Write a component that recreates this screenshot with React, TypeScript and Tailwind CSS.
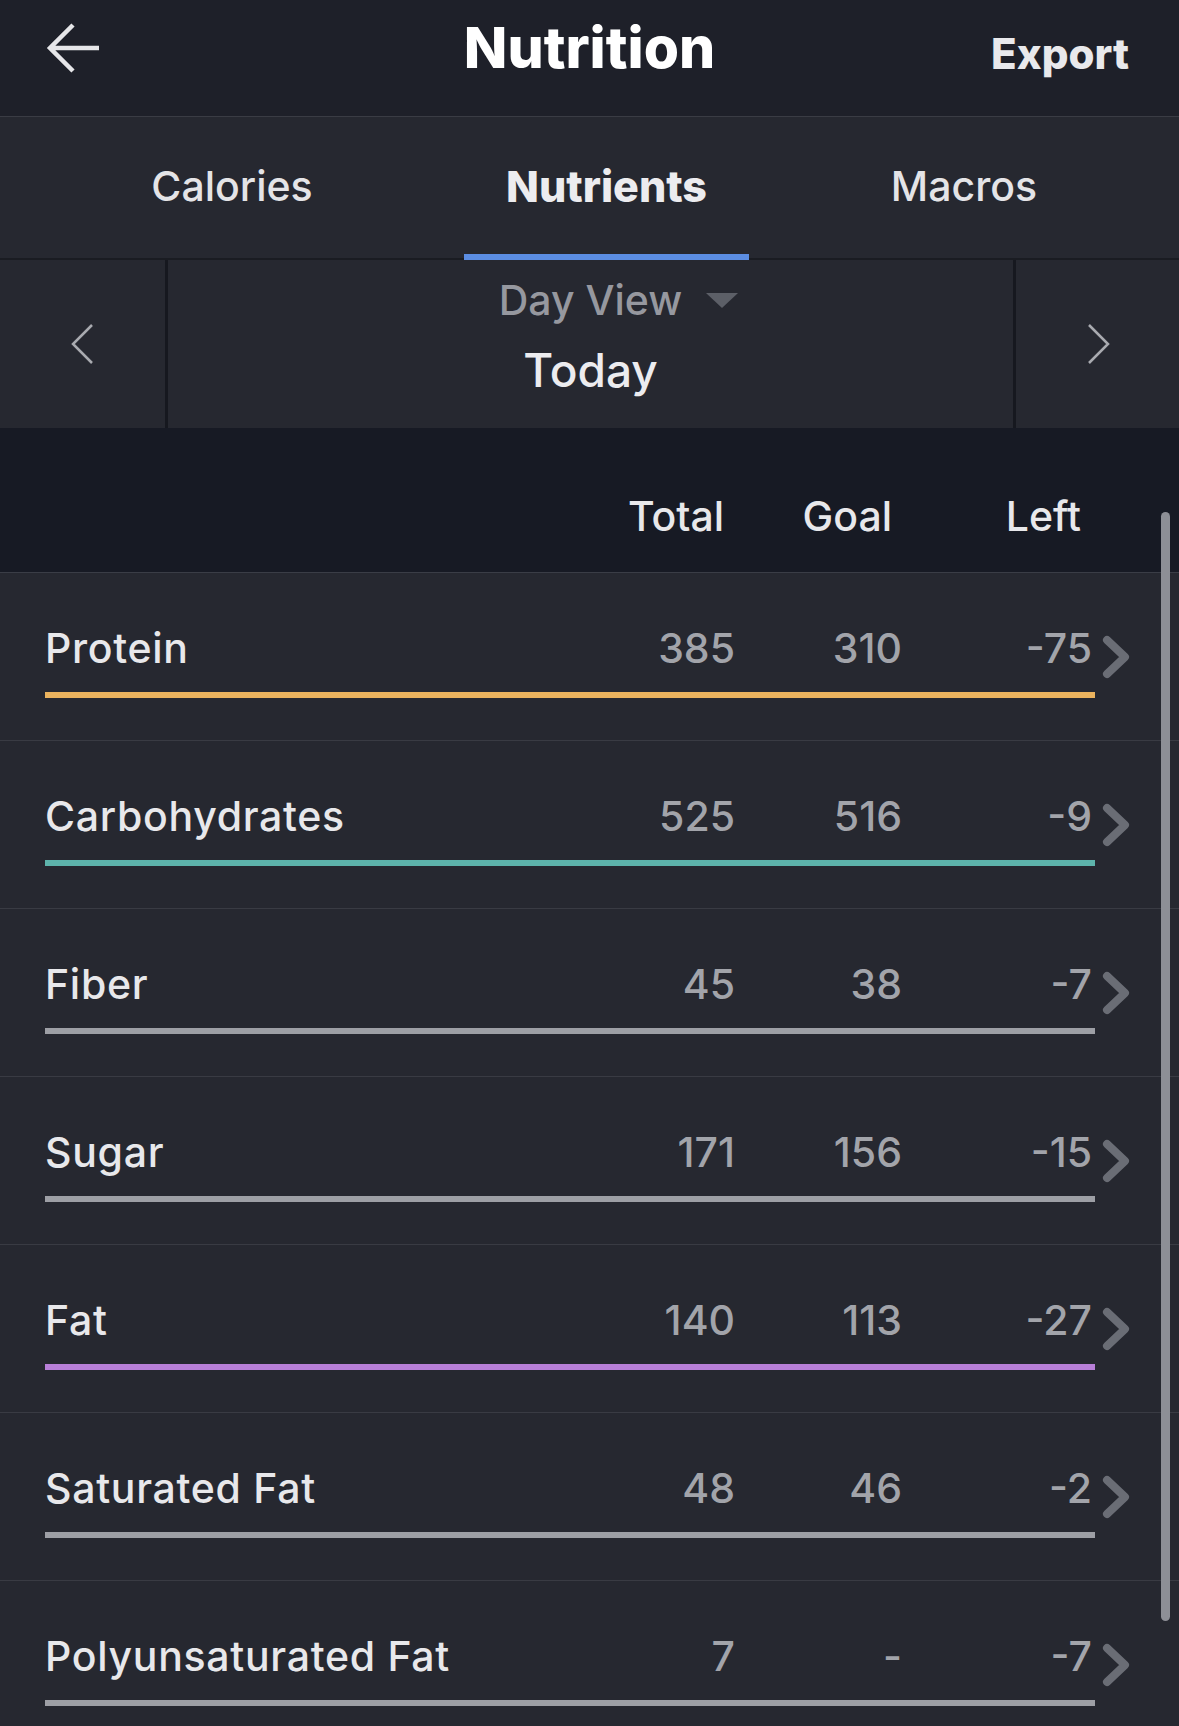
import { useState } from "react";

// linhas da tabela de nutrientes
const nutrients = [
  { name: "Protein", total: "385", goal: "310", left: "-75", bar: "bg-[#ebb35e]" },
  { name: "Carbohydrates", total: "525", goal: "516", left: "-9", bar: "bg-[#5db3ab]" },
  { name: "Fiber", total: "45", goal: "38", left: "-7", bar: "bg-[#9d9fa5]" },
  { name: "Sugar", total: "171", goal: "156", left: "-15", bar: "bg-[#9d9fa5]" },
  { name: "Fat", total: "140", goal: "113", left: "-27", bar: "bg-[#b87fd8]" },
  { name: "Saturated Fat", total: "48", goal: "46", left: "-2", bar: "bg-[#9d9fa5]" },
  { name: "Polyunsaturated Fat", total: "7", goal: "-", left: "-7", bar: "bg-[#9d9fa5]" },
];

const tabs = [
  { label: "Calories", width: "w-[464px]" },
  { label: "Nutrients", width: "w-[285px]" },
  { label: "Macros", width: "flex-1" },
];

function BackArrow() {
  return (
    <svg width="56" height="56" viewBox="0 0 56 56" fill="none">
      <path d="M4 27 H53 M27 4 L4 27 L27 50" stroke="#e6e6e9" strokeWidth="4.5" />
    </svg>
  );
}

function NavChevron({ dir }: { dir: "left" | "right" }) {
  return (
    <svg width="26" height="42" viewBox="0 0 26 42" fill="none">
      <path
        d={dir === "left" ? "M22 2 L3 21 L22 40" : "M4 2 L23 21 L4 40"}
        stroke="#a9abb0"
        strokeWidth="2.5"
      />
    </svg>
  );
}

function RowChevron() {
  return (
    <svg width="30" height="46" viewBox="0 0 30 46" fill="none">
      <path
        d="M6 6 L24 23 L6 40"
        stroke="#6a6d75"
        strokeWidth="8"
        strokeLinecap="round"
        strokeLinejoin="round"
      />
    </svg>
  );
}

export default function App() {
  const [active, setActive] = useState("Nutrients");

  return (
    <div className="relative w-full h-[1726px] overflow-hidden bg-[#262830] font-['Inter','Noto_Sans',sans-serif] text-[#e8e8eb]">
      {/* Cabeçalho */}
      <header className="h-[117px] bg-[#1e2029] border-b border-[#3a3c44] grid grid-cols-[1fr_auto_1fr] items-start">
        <div className="pl-[46px] pt-[21px]">
          <BackArrow />
        </div>
        <h1 className="mt-[16px] text-[57px] leading-[64px] font-extrabold text-white">
          Nutrition
        </h1>
        <div className="flex justify-end pr-[50px] pt-[29px]">
          <span className="text-[42px] leading-[50px] font-extrabold text-[#e9e9ec]">Export</span>
        </div>
      </header>

      {/* Abas */}
      <nav className="flex h-[143px]">
        {tabs.map((t) => {
          const isActive = t.label === active;
          return (
            <button
              key={t.label}
              onClick={() => setActive(t.label)}
              className={`${t.width} flex flex-col`}
            >
              <span
                className={`flex-1 flex items-center justify-center leading-[50px] ${
                  isActive ? "text-[43px] font-extrabold text-[#ececef]" : "text-[41px] font-medium text-[#e4e4e7]"
                }`}
              >
                {t.label}
              </span>
              <span className={`h-[6px] flex flex-col justify-end ${isActive ? "bg-[#5b8de2]" : ""}`}>
                {!isActive && <span className="h-[2px] bg-[#1a1c22]" />}
              </span>
            </button>
          );
        })}
      </nav>

      {/* Navegação de data */}
      <section className="flex h-[168px]">
        <div className="w-[165px] flex items-center justify-center">
          <NavChevron dir="left" />
        </div>
        <div className="w-[3px] bg-[#16181f]" />
        <div className="flex-1 flex flex-col items-center pt-[15px]">
          <span className="relative text-[41px] leading-[50px] font-medium text-[#96989f]">
            Day View
            <span className="absolute left-full top-[18px] ml-[24px] w-0 h-0 border-l-[16px] border-r-[16px] border-t-[15px] border-l-transparent border-r-transparent border-t-[#5c5f67]" />
          </span>
          <span className="mt-[17px] text-[46px] leading-[56px] font-medium text-[#ececef]">Today</span>
        </div>
        <div className="w-[3px] bg-[#16181f]" />
        <div className="w-[163px] flex items-center justify-center">
          <NavChevron dir="right" />
        </div>
      </section>

      {/* Cabeçalho da tabela */}
      <div className="h-[145px] bg-[#171a24] border-b border-[#3a3d46] flex pt-[63px] pr-[98px] text-[41px] leading-[50px] font-medium text-[#e8e8eb]">
        <div className="flex-1" />
        <div className="w-[160px] text-right">Total</div>
        <div className="w-[168px] text-right">Goal</div>
        <div className="w-[189px] text-right">Left</div>
      </div>

      {/* Linhas */}
      {nutrients.map((n) => (
        <div key={n.name} className="h-[168px] border-b border-[#393b43] pl-[45px] pt-[50px]">
          <div className="flex items-start pr-[48px] text-[41px] leading-[50px] font-medium">
            <div className="flex-1 text-[#e8e8eb] tracking-[0.7px]">{n.name}</div>
            <div className="w-[160px] text-right text-[#a2a4aa]">{n.total}</div>
            <div className="w-[167px] text-right text-[#a2a4aa]">{n.goal}</div>
            <div className="w-[190px] text-right text-[#a2a4aa]">{n.left}</div>
            <div className="ml-[9px] w-[30px] mt-[11px]">
              <RowChevron />
            </div>
          </div>
          <div className={`mt-[12px] w-[1050px] h-[6px] ${n.bar}`} />
        </div>
      ))}

      {/* Barra de rolagem */}
      <div className="absolute left-[1161px] top-[512px] w-[9px] h-[1109px] rounded-full bg-[#8d8f96]" />
    </div>
  );
}
